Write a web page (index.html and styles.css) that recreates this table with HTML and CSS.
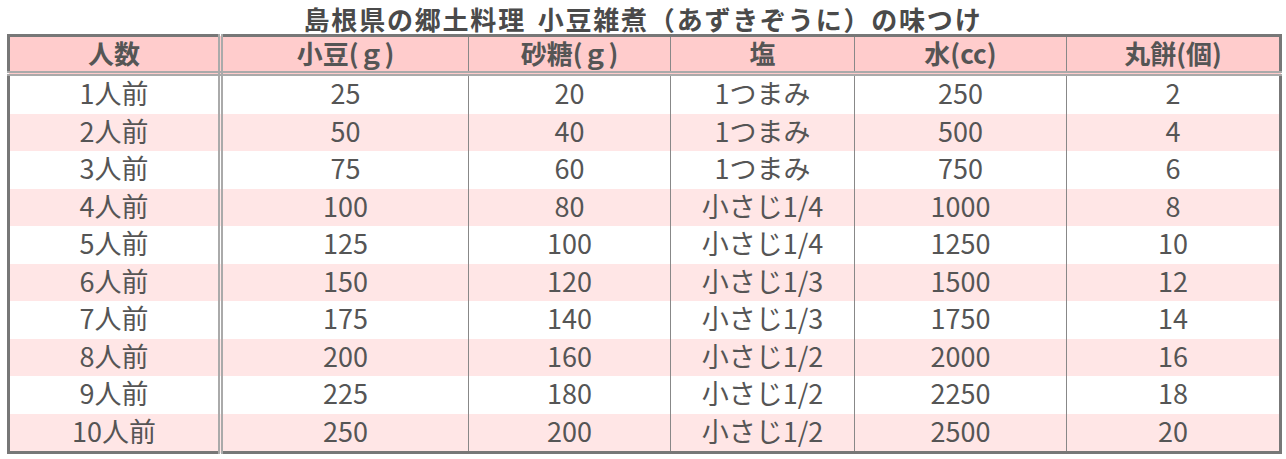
FILE: index.html
```html
<!DOCTYPE html>
<html lang="ja">
<head>
<meta charset="utf-8">
<link rel="stylesheet" href="styles.css">
</head>
<body>
<div class="page">
  <h1 class="title">島根県の郷土料理 小豆雑煮（あずきぞうに）の味つけ</h1>
  <table class="recipe">
    <colgroup>
      <col class="c1"><col class="c2"><col class="c3"><col class="c4"><col class="c5"><col class="c6">
    </colgroup>
    <thead>
      <tr><th class="first">人数</th><th>小豆(ｇ)</th><th>砂糖(ｇ)</th><th>塩</th><th>水(cc)</th><th>丸餅(個)</th></tr>
    </thead>
    <tbody>
      <tr><td class="first">1人前</td><td>25</td><td>20</td><td>1つまみ</td><td>250</td><td>2</td></tr>
      <tr><td class="first">2人前</td><td>50</td><td>40</td><td>1つまみ</td><td>500</td><td>4</td></tr>
      <tr><td class="first">3人前</td><td>75</td><td>60</td><td>1つまみ</td><td>750</td><td>6</td></tr>
      <tr><td class="first">4人前</td><td>100</td><td>80</td><td>小さじ1/4</td><td>1000</td><td>8</td></tr>
      <tr><td class="first">5人前</td><td>125</td><td>100</td><td>小さじ1/4</td><td>1250</td><td>10</td></tr>
      <tr><td class="first">6人前</td><td>150</td><td>120</td><td>小さじ1/3</td><td>1500</td><td>12</td></tr>
      <tr><td class="first">7人前</td><td>175</td><td>140</td><td>小さじ1/3</td><td>1750</td><td>14</td></tr>
      <tr><td class="first">8人前</td><td>200</td><td>160</td><td>小さじ1/2</td><td>2000</td><td>16</td></tr>
      <tr><td class="first">9人前</td><td>225</td><td>180</td><td>小さじ1/2</td><td>2250</td><td>18</td></tr>
      <tr><td class="first">10人前</td><td>250</td><td>200</td><td>小さじ1/2</td><td>2500</td><td>20</td></tr>
    </tbody>
  </table>
</div>
</body>
</html>
```
FILE: styles.css
```css
html, body {
  margin: 0;
  padding: 0;
  background: #ffffff;
}
.page {
  padding: 0 7px;
  font-family: "Noto Sans CJK JP", sans-serif;
  color: #555555;
}
.title {
  margin: 0;
  height: 34px;
  line-height: 38px;
  font-size: 26px;
  letter-spacing: 1.8px;
  word-spacing: 4px;
  font-weight: bold;
  text-align: center;
  color: #4a4a4a;
}
.recipe {
  width: 1272px;
  table-layout: fixed;
  border-collapse: collapse;
  border: 3px solid #777777;
}
.c1 { width: 212px; }
.c2 { width: 248px; }
.c3 { width: 202px; }
.c4 { width: 184px; }
.c5 { width: 212px; }
.c6 { width: 214px; }
.recipe th,
.recipe td {
  text-align: center;
  border-left: 1px solid #888888;
  color: #555555;
}
.recipe th {
  height: 32px;
  padding: 0 0 2px;
  background: #ffcccc;
  font-size: 26px;
  font-weight: bold;
  line-height: 32px;
  border-bottom: 5px double #aaaaaa;
}
.recipe td {
  height: 33.5px;
  padding: 0 0 4px;
  font-size: 27px;
  line-height: 33px;
}
.recipe .first {
  border-left: none;
  border-right: 5px double #aaaaaa;
}
.recipe tbody tr:nth-child(even) td {
  background: #ffe6e6;
}
```
